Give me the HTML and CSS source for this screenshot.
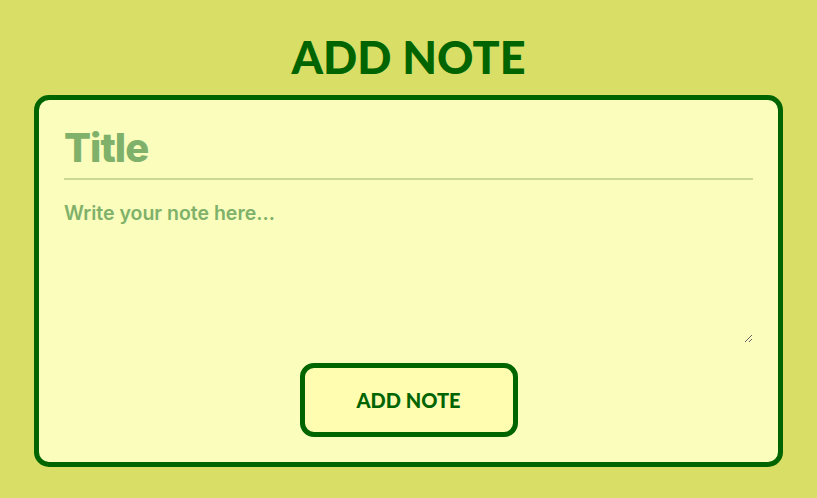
FILE: index.html
```html
<!DOCTYPE html>
<html>
<head>
<meta charset="utf-8">
<link rel="stylesheet" href="styles.css">
</head>
<body>
<main class="page">
  <h1 class="heading">ADD NOTE</h1>
  <form class="card">
    <input class="title-input" type="text" placeholder="Title">
    <textarea class="note-input" placeholder="Write your note here..."></textarea>
    <button class="add-btn" type="button">ADD NOTE</button>
  </form>
</main>
</body>
</html>
```

FILE: styles.css
```css
html, body {
  margin: 0;
  padding: 0;
}
body {
  background: #d9df66;
  font-family: Lato, "Noto Sans", sans-serif;
  height: 498px;
  overflow: hidden;
}
.page {
  display: flex;
  flex-direction: column;
  align-items: center;
  padding-top: 30px;
}
.heading {
  margin: 0 0 10px;
  font-size: 45px;
  line-height: 55px;
  font-weight: 900;
  color: #006400;
  letter-spacing: 0;
}
.card {
  box-sizing: border-box;
  width: 749px;
  height: 372px;
  background: #fafdbc;
  border: 5px solid #006400;
  border-radius: 15px;
  padding: 20px 25px 25px;
  display: flex;
  flex-direction: column;
}
.title-input {
  box-sizing: border-box;
  font-family: Inter, Lato, sans-serif;
  font-size: 40px;
  font-weight: 800;
  letter-spacing: -1px;
  color: #006400;
  background: transparent;
  border: none;
  border-bottom: 2px solid #c9d995;
  padding: 0 0 4px;
  height: 60px;
  outline: none;
}
.title-input::placeholder {
  color: #7fb16a;
}
.note-input {
  box-sizing: border-box;
  font-family: Inter, Lato, sans-serif;
  font-size: 19.5px;
  font-weight: 600;
  color: #006400;
  background: transparent;
  border: none;
  outline: none;
  padding: 21px 0 0;
  height: 163px;
  margin: 0;
  resize: vertical;
}
.note-input::placeholder {
  color: #7fb16a;
}
.add-btn {
  align-self: center;
  margin-top: 20px;
  width: 218px;
  height: 74px;
  flex-shrink: 0;
  box-sizing: border-box;
  background: #fffdb0;
  border: 5px solid #006400;
  border-radius: 14px;
  font-family: inherit;
  font-size: 20px;
  font-weight: 900;
  color: #006400;
  cursor: pointer;
}
```
